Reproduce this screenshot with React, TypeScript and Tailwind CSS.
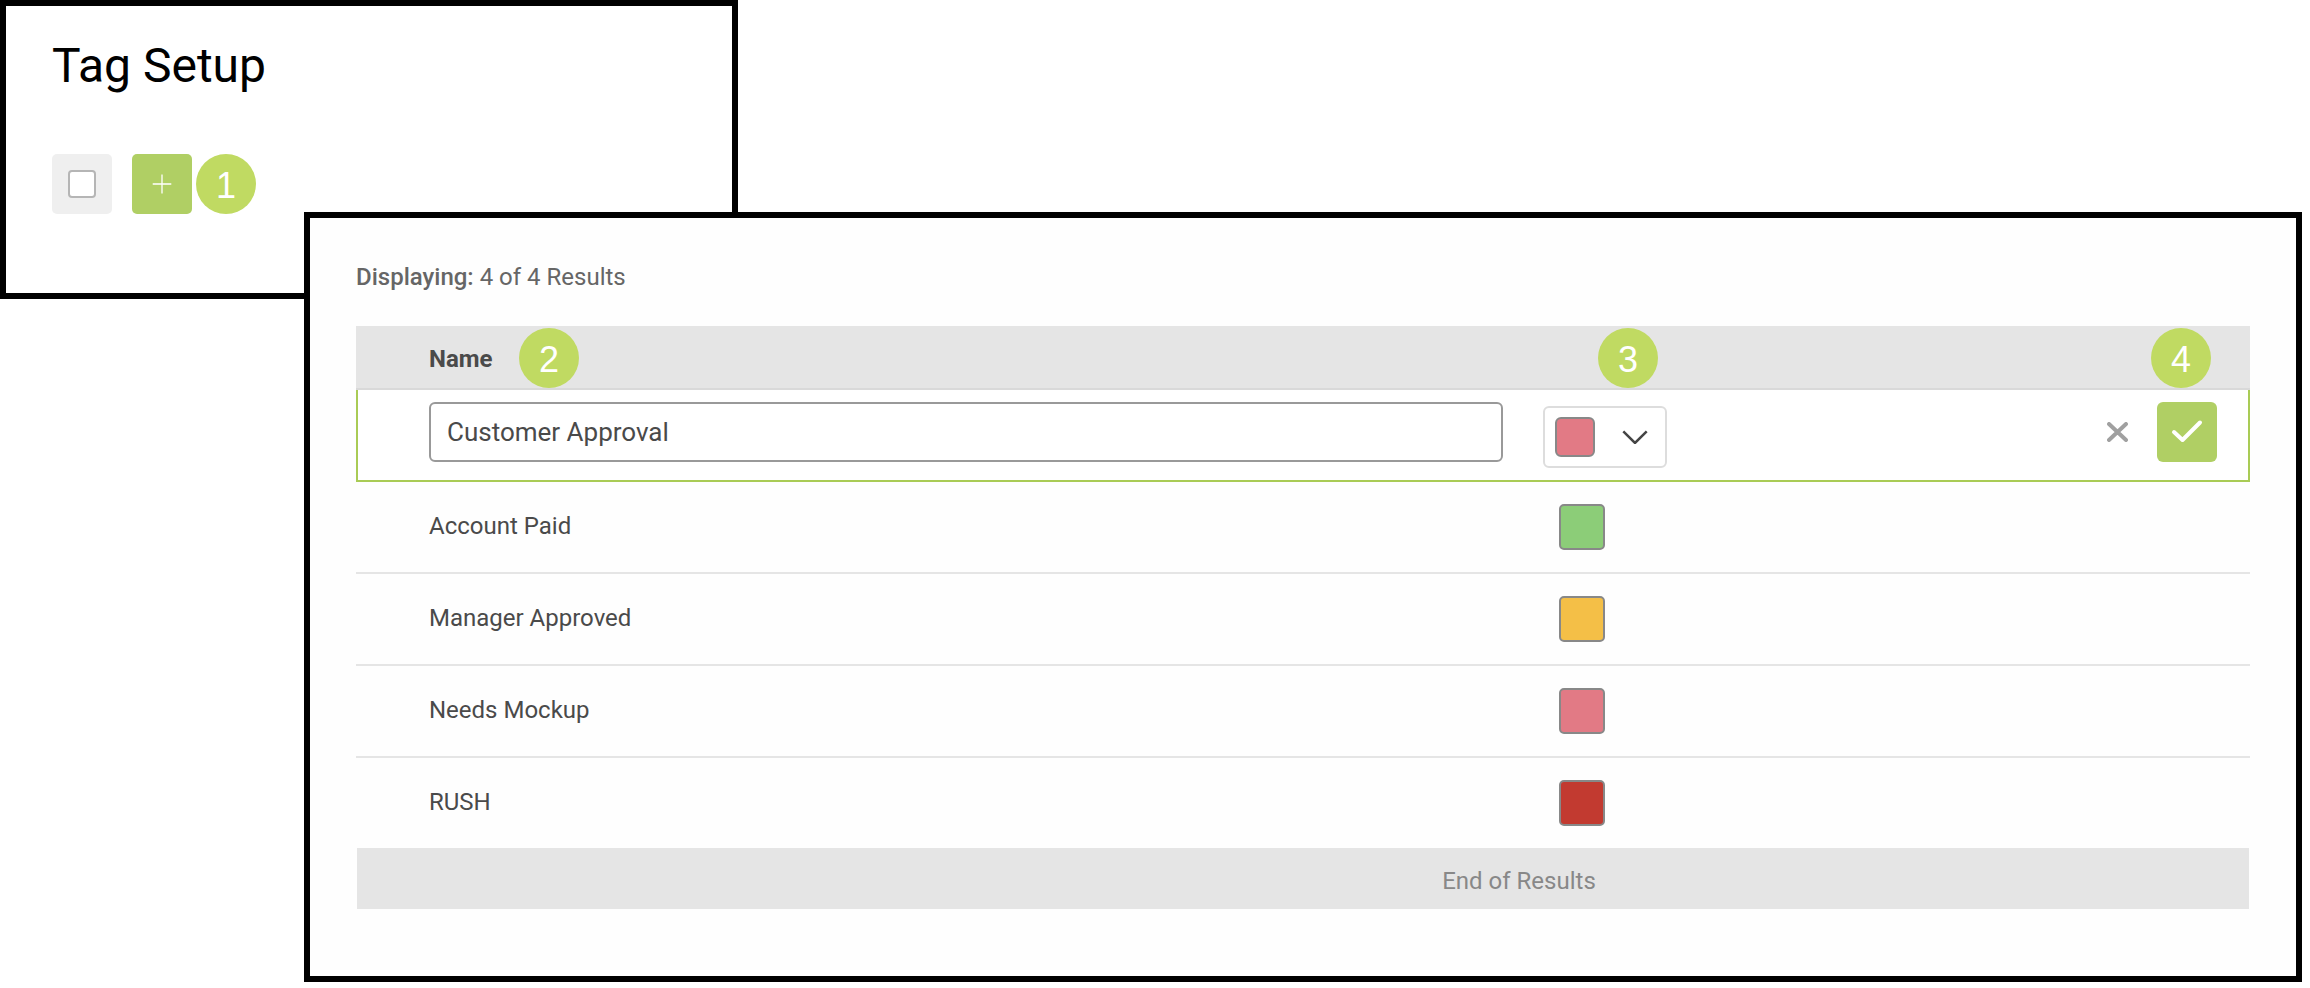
const tags = [
  { name: 'Account Paid', color: 'bg-[#8ccd78]' },
  { name: 'Manager Approved', color: 'bg-[#f4bf47]' },
  { name: 'Needs Mockup', color: 'bg-[#e27a85]' },
  { name: 'RUSH', color: 'bg-[#c23a30]' },
];

function Badge({ n, className }: { n: number; className: string }) {
  return (
    <span
      className={`absolute flex h-[60px] w-[60px] items-center justify-center rounded-full bg-[#c0da62] pt-[3px] font-['Liberation_Sans',sans-serif] text-[36px] font-normal leading-none text-white ${className}`}
    >
      {n}
    </span>
  );
}

export default function App() {
  return (
    <main className="h-[988px] w-[2310px] overflow-hidden bg-white font-['Roboto',sans-serif]">
      <section className="relative h-[299px] w-[738px] border-[6px] border-black bg-white pl-[46px] pt-[32px]">
        <h1 className="text-[48px] leading-[56px] text-black">Tag Setup</h1>
        <div className="mt-[60px] flex gap-[20px]">
          <button className="flex h-[60px] w-[60px] items-center justify-center rounded-[5px] bg-[#efefef]">
            <span className="h-[28px] w-[28px] rounded-[4px] border-2 border-[#b5b5b5] bg-white" />
          </button>
          <button className="flex h-[60px] w-[60px] items-center justify-center rounded-[5px] bg-[#b0cf64]">
            <svg width="20" height="20" viewBox="0 0 20 20" fill="none" stroke="#fff" strokeWidth="1.3">
              <path d="M0.7 10H19.3M10 0.5V19.5" />
            </svg>
          </button>
        </div>
        <Badge n={1} className="left-[190px] top-[148px]" />
      </section>

      <section className="relative ml-[304px] mt-[-87px] h-[770px] w-[1998px] border-[6px] border-black bg-[#fefefe] pl-[46px] pt-[43px]">
        <p className="text-[24px] leading-[32px] text-[#666]">
          <span className="font-medium">Displaying:</span> 4 of 4 Results
        </p>

        <div className="mt-[33px] w-[1894px]">
          <div className="relative flex h-[64px] items-center border-b-2 border-[#d9d9d9] bg-[#e5e5e5] pl-[73px] pt-[4px] text-[24px] font-bold text-[#4a4a4a]">
            Name
            <Badge n={2} className="left-[163px] top-[2px]" />
            <Badge n={3} className="left-[1242px] top-[2px]" />
            <Badge n={4} className="left-[1795px] top-[2px]" />
          </div>

          <div className="flex h-[92px] items-start border-x-2 border-b-2 border-[#a9cb55] bg-white pl-[71px] pr-[31px]">
            <input
              readOnly
              value="Customer Approval"
              className="mt-[12px] h-[60px] w-[1074px] rounded-[6px] border-2 border-[#999] pl-[16px] text-[26px] text-[#4a4a4a] outline-none"
            />
            <button className="ml-[40px] mt-[16px] flex h-[62px] w-[124px] items-center rounded-[6px] border-2 border-[#ddd] bg-white pl-[10px]">
              <span className="h-[40px] w-[40px] rounded-[6px] border-2 border-[#888] bg-[#e27a85]" />
              <svg width="26" height="14" viewBox="0 0 26 14" fill="none" stroke="#444" strokeWidth="2.5" className="ml-[27px]">
                <path d="M1.3 1.3L13 13L24.7 1.3" />
              </svg>
            </button>
            <svg width="21" height="20" viewBox="0 0 21 20" fill="none" stroke="#a0a0a0" strokeWidth="4" strokeLinecap="round" className="ml-auto mt-[32px]">
              <path d="M2 2L19 18M19 2L2 18" />
            </svg>
            <button className="ml-[29px] mt-[12px] flex h-[60px] w-[60px] items-center justify-center rounded-[6px] bg-[#b0cf64]">
              <svg width="60" height="60" viewBox="0 0 60 60" fill="none" stroke="#fff" strokeWidth="4" strokeLinecap="round" strokeLinejoin="round">
                <path d="M17 30L25.5 38L43 20.5" />
              </svg>
            </button>
          </div>

          {tags.map((tag, i) => (
            <div
              key={tag.name}
              className={`flex items-center pl-[73px] text-[24px] text-[#4a4a4a] ${
                i < 3 ? 'h-[92px] border-b-2 border-[#e5e5e5]' : 'h-[90px]'
              }`}
            >
              <span className="w-[1130px] pb-[2px]">{tag.name}</span>
              <span className={`h-[46px] w-[46px] rounded-[5px] border-2 border-[#888] ${tag.color}`} />
            </div>
          ))}

          <div className="ml-px flex h-[61px] w-[1892px] items-center justify-center bg-[#e5e5e5] pl-[432px] pt-[4px] text-[24px] text-[#888]">
            End of Results
          </div>
        </div>
      </section>
    </main>
  );
}
